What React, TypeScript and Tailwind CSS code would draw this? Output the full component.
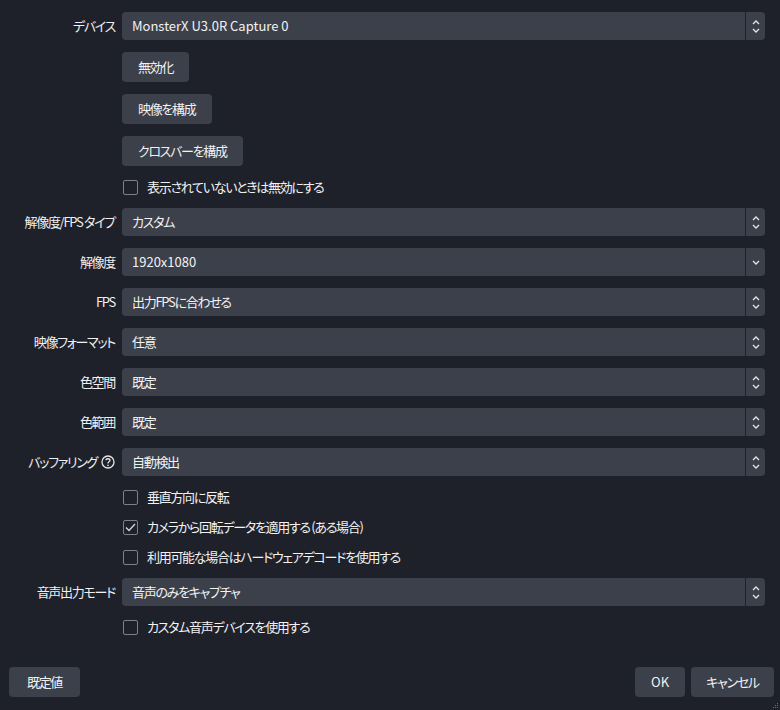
import type { ReactNode } from 'react';

const font = { fontFamily: '"Noto Sans CJK JP", "Noto Sans", sans-serif' };

function Chevrons({ single }: { single?: boolean }) {
    return (
        <div className="w-[20px] h-full flex flex-col items-center justify-center gap-[3px] border-l border-[#1f212a]">
            {!single && (
                <svg width="8" height="5" viewBox="0 0 8 5" fill="none">
                    <path d="M1 4 L4 1 L7 4" stroke="#e6e6e6" strokeWidth="1.3" />
                </svg>
            )}
            <svg width="8" height="5" viewBox="0 0 8 5" fill="none">
                <path d="M1 1 L4 4 L7 1" stroke="#e6e6e6" strokeWidth="1.3" />
            </svg>
        </div>
    );
}

function Row({ label, children }: { label?: ReactNode; children: ReactNode }) {
    return (
        <div className="flex items-center">
            <div className="w-[116px] flex justify-end items-center gap-1 text-[13px] text-[#f0f0f0] pr-[1px] whitespace-nowrap">{label}</div>
            <div className="ml-[6px] flex-1 flex">{children}</div>
        </div>
    );
}

function Combo({ value, single, latin }: { value: string; single?: boolean; latin?: boolean }) {
    return (
        <div className="h-[28px] w-[643px] flex items-stretch bg-[#3c404b] rounded-[4px] overflow-hidden">
            <div className={`flex-1 flex items-center pl-[10px] text-[13px] text-[#f2f2f2] ${latin ? 'tracking-normal' : ''}`}>{value}</div>
            <Chevrons single={single} />
        </div>
    );
}

function Button({ children, className = '' }: { children: ReactNode; className?: string }) {
    return (
        <div className={`h-[30px] flex items-center justify-center px-4 bg-[#3c404b] rounded-[4px] text-[13px] text-[#f2f2f2] whitespace-nowrap ${className}`}>
            {children}
        </div>
    );
}

function Check({ label, checked }: { label: string; checked?: boolean }) {
    return (
        <div className="h-[18px] flex items-center gap-[9px] pl-[1px]">
            <div className="w-[15px] h-[15px] border border-[#7d8089] rounded-[2px] flex items-center justify-center">
                {checked && (
                    <svg width="11" height="9" viewBox="0 0 11 9" fill="none">
                        <path d="M1 4.5 L4 7.5 L10 1" stroke="#d8d8d8" strokeWidth="1.3" />
                    </svg>
                )}
            </div>
            <span className="text-[13px] text-[#f2f2f2]">{label}</span>
        </div>
    );
}

export default function App() {
    return (
        <div style={font} className="w-[780px] h-[710px] bg-[#1f212a] flex flex-col relative select-none tracking-[-1.3px] [font-feature-settings:'palt']">
            <div className="flex flex-col gap-3 pt-[12px]">
                <Row label="デバイス"><Combo value="MonsterX U3.0R Capture 0" latin /></Row>
                <Row><Button>無効化</Button></Row>
                <Row><Button>映像を構成</Button></Row>
                <Row><Button>クロスバーを構成</Button></Row>
                <Row><Check label="表示されていないときは無効にする" /></Row>
                <Row label="解像度/FPS タイプ"><Combo value="カスタム" /></Row>
                <Row label="解像度"><Combo value="1920x1080" single latin /></Row>
                <Row label="FPS"><Combo value="出力FPSに合わせる" /></Row>
                <Row label="映像フォーマット"><Combo value="任意" /></Row>
                <Row label="色空間"><Combo value="既定" /></Row>
                <Row label="色範囲"><Combo value="既定" /></Row>
                <Row
                    label={
                        <>
                            <span>バッファリング</span>
                            <svg width="14" height="14" viewBox="0 0 14 14" fill="none">
                                <circle cx="7" cy="7" r="6" stroke="#e6e6e6" strokeWidth="1.3" />
                                <path d="M5 5.3 C5 3.2 9 3.2 9 5.3 C9 6.8 7 6.8 7 8.4" stroke="#e6e6e6" strokeWidth="1.3" />
                                <circle cx="7" cy="10.4" r="0.8" fill="#e6e6e6" />
                            </svg>
                        </>
                    }
                >
                    <Combo value="自動検出" />
                </Row>
                <Row><Check label="垂直方向に反転" /></Row>
                <Row><Check label="カメラから回転データを適用する (ある場合)" checked /></Row>
                <Row><Check label="利用可能な場合はハードウェアデコードを使用する" /></Row>
                <Row label="音声出力モード"><Combo value="音声のみをキャプチャ" /></Row>
                <Row><Check label="カスタム音声デバイスを使用する" /></Row>
            </div>

            {/* dialog buttons */}
            <div className="mt-auto mb-[13px] flex items-center pl-[9px] pr-[6px]">
                <Button className="w-[71px]">既定値</Button>
                <div className="ml-auto flex gap-[6px]">
                    <Button className="w-[50px] tracking-normal">OK</Button>
                    <Button className="w-[83px]">キャンセル</Button>
                </div>
            </div>

            {/* size grip */}
            <svg className="absolute right-[1px] bottom-[1px]" width="6" height="6" viewBox="0 0 6 6">
                <rect x="4" y="0" width="1" height="1" fill="#6b6e76" />
                <rect x="2" y="2" width="1" height="1" fill="#6b6e76" />
                <rect x="4" y="2" width="1" height="1" fill="#6b6e76" />
                <rect x="0" y="4" width="1" height="1" fill="#6b6e76" />
                <rect x="2" y="4" width="1" height="1" fill="#6b6e76" />
                <rect x="4" y="4" width="1" height="1" fill="#6b6e76" />
            </svg>
        </div>
    );
}
